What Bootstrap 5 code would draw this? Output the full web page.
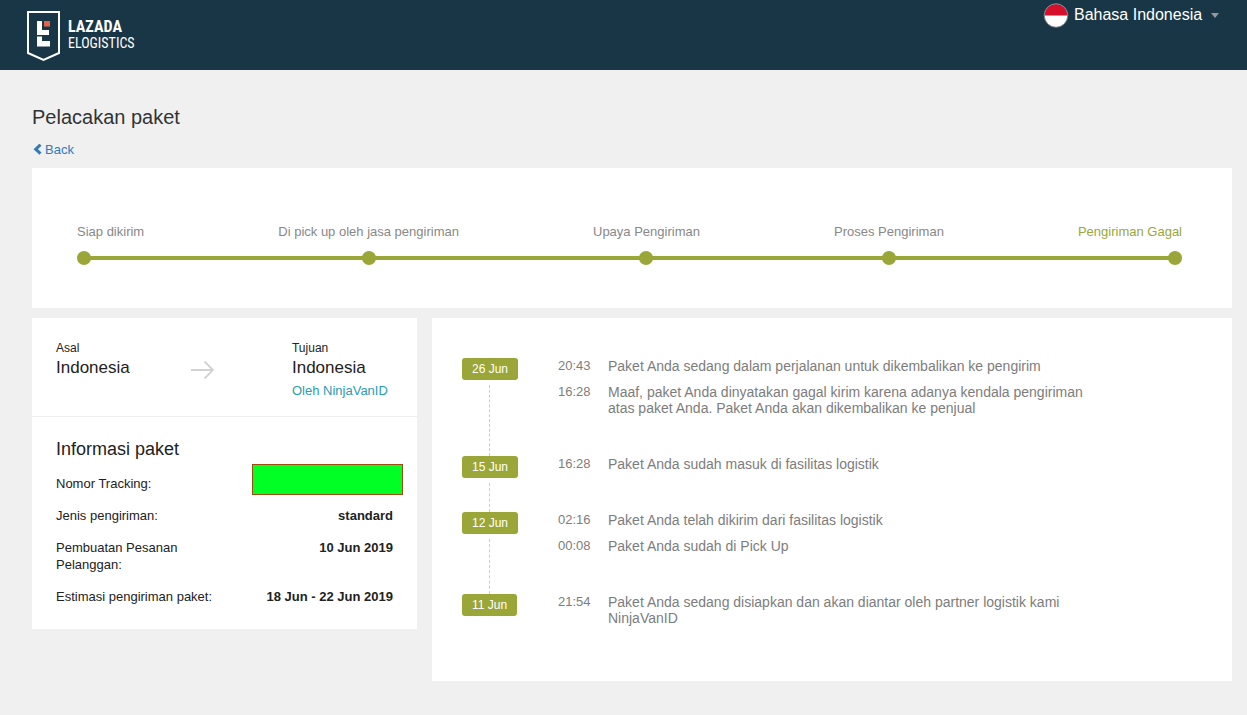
<!DOCTYPE html>
<html lang="id">
<head>
<meta charset="utf-8">
<meta name="viewport" content="width=device-width, initial-scale=1">
<title>Pelacakan paket - Lazada eLogistics</title>
<link href="https://cdn.jsdelivr.net/npm/bootstrap@5.3.0/dist/css/bootstrap.min.css" rel="stylesheet">
<style>
  :root { --olive: #9ba638; }
  body { background: #f0f0f0; color: #222; font-family: "Liberation Sans", Arial, sans-serif; font-size: 13px; line-height: 17px; }
  .topbar { background: #193647; min-height: 70px; padding: 0 28px 0 26px; }
  .brand { gap: 7px; margin-top: 10px; font-family: "Roboto Condensed", Roboto, sans-serif; font-size: 14px; line-height: 17px; }
  .brand strong { font-size: 16px; }
  .brand small { font-size: 14px; }
  .brand-name { padding-bottom: 2px; }
  .lang { gap: 5px; margin-top: 2px; }
  .lang-select { appearance: none; background: transparent; border: 0; color: #fff; font-size: 16px; line-height: 22px; height: 24px; padding: 0; }
  .lang-select option { color: #222; }
  .caret { width: 8px; height: 5px; margin-left: 3px; }
  .page { padding: 35px 15px 34px 32px; }
  .page-title { color: #333; font-size: 20px; line-height: 24px; margin-bottom: 11px; }
  .back { color: #337ab7; gap: 2px; line-height: 20px; margin-bottom: 8px; }
  .panel { background: #fff; }
  .steps-panel { padding: 55px 50px 43px 45px; margin-bottom: 10px; }
  .steps { color: #888; }
  .steps::before { content: ""; position: absolute; left: 7px; right: 7px; bottom: 5px; height: 4px; background: var(--olive); }
  .step { gap: 11px; align-items: center; }
  .step::after { content: ""; width: 14px; height: 14px; border-radius: 50%; background: var(--olive); position: relative; }
  .step:first-child { align-items: flex-start; }
  .step:last-child { align-items: flex-end; color: var(--olive); }
  .info-col { padding-right: 15px; }
  .route { padding: 22px 24px 13px; border-bottom: 1px solid #eee; }
  .route-label { font-size: 12px; line-height: 17px; }
  .route-place { font-size: 17px; line-height: 22px; }
  .route-by { color: #2b9cb5; line-height: 24px; display: block; }
  .route-to { width: 101px; }
  .route-arrow { margin-top: 20px; margin-right: 16px; }
  .details { padding: 21px 24px 9px; }
  .details h2 { font-size: 18px; line-height: 22px; margin-bottom: 15px; }
  .detail-row { margin-bottom: 15px; }
  .detail-row dt { max-width: 160px; }
  .masked { position: absolute; right: -10px; bottom: -3px; width: 151px; height: 31px; background: #00ff24; border: 1px solid #a04a12; }
  .timeline-panel { padding: 40px 30px 15px; }
  .day-rail { width: 96px; }
  .day { background: var(--olive); color: #fff; font-size: 12px; line-height: 22px; padding: 0 10px; border-radius: 3px; }
  .day-line { width: 1px; margin: 5px 0 0 27px; border-left: 1px dashed #ccc; }
  .events { color: #7d7d7d; padding-bottom: 30px; }
  .event { gap: 17px; margin-bottom: 10px; font-size: 14px; line-height: 16px; }
  .event time { font-size: 13px; width: 33px; }
  .event p { max-width: 490px; }
</style>
</head>
<body>
<header class="topbar d-flex justify-content-between align-items-start">
  <a href="#" class="brand d-flex align-items-center text-white text-decoration-none">
    <svg width="35" height="52" viewBox="0 0 35 52" aria-hidden="true">
      <path d="M2 2H33V43L17.500 50 2 43Z" fill="none" stroke="#fff" stroke-width="2"/>
      <path d="M11 11h5v9h7v5H11zM11 26.500h5V31h8v5.500H11z" fill="#fff"/>
      <path d="M18 11h6v5.500h-6z" fill="#e8604c"/>
    </svg>
    <span class="brand-name"><strong class="d-block">LAZADA</strong><small class="d-block">ELOGISTICS</small></span>
  </a>
  <div class="lang d-flex align-items-center">
    <svg width="26" height="26" viewBox="0 0 26 26" aria-hidden="true">
      <circle cx="13" cy="13.500" r="11.500" fill="#fff"/>
      <path d="M1.500 13.500a11.500 11.500 0 0 1 23 0z" fill="#d80f2b"/>
      <circle cx="13" cy="13.500" r="11.800" fill="none" stroke="#7c878d"/>
    </svg>
    <select class="lang-select" aria-label="Bahasa"><option>Bahasa Indonesia</option></select>
    <svg class="caret" viewBox="0 0 8 5" aria-hidden="true"><path d="M0 0h8L4 5z" fill="#93999c"/></svg>
  </div>
</header>

<main class="page">
  <h1 class="page-title fw-normal">Pelacakan paket</h1>
  <a href="#" class="back d-inline-flex align-items-center text-decoration-none">
    <svg width="11" height="12" viewBox="0 0 11 12" aria-hidden="true"><path d="M8.500 .7L3.700 5.200l4.800 4.500" fill="none" stroke="#337ab7" stroke-width="3"/></svg>Back
  </a>

  <section class="panel steps-panel">
    <ol class="steps list-unstyled d-flex justify-content-between position-relative mb-0">
      <li class="step d-flex flex-column">Siap dikirim</li>
      <li class="step d-flex flex-column">Di pick up oleh jasa pengiriman</li>
      <li class="step d-flex flex-column">Upaya Pengiriman</li>
      <li class="step d-flex flex-column">Proses Pengiriman</li>
      <li class="step d-flex flex-column" aria-current="step">Pengiriman Gagal</li>
    </ol>
  </section>

  <div class="row g-0 align-items-start">
    <div class="col-4 info-col">
      <div class="panel">
        <section class="route d-flex justify-content-between align-items-start">
          <div class="route-from">
            <div class="route-label">Asal</div>
            <div class="route-place">Indonesia</div>
          </div>
          <svg class="route-arrow" width="25" height="20" viewBox="0 0 25 20" aria-hidden="true"><path d="M1 10h22M14.500 1.500L23 10l-8.500 8.500" fill="none" stroke="#d2d2d2" stroke-width="1.800"/></svg>
          <div class="route-to">
            <div class="route-label">Tujuan</div>
            <div class="route-place">Indonesia</div>
            <a href="#" class="route-by text-decoration-none">Oleh NinjaVanID</a>
          </div>
        </section>
        <section class="details">
          <h2 class="fw-normal">Informasi paket</h2>
          <dl class="mb-0">
            <div class="detail-row d-flex justify-content-between position-relative"><dt class="fw-normal">Nomor Tracking:</dt><dd class="masked mb-0"></dd></div>
            <div class="detail-row d-flex justify-content-between"><dt class="fw-normal">Jenis pengiriman:</dt><dd class="fw-bold mb-0">standard</dd></div>
            <div class="detail-row d-flex justify-content-between"><dt class="fw-normal">Pembuatan Pesanan Pelanggan:</dt><dd class="fw-bold mb-0">10 Jun 2019</dd></div>
            <div class="detail-row d-flex justify-content-between"><dt class="fw-normal">Estimasi pengiriman paket:</dt><dd class="fw-bold mb-0">18 Jun - 22 Jun 2019</dd></div>
          </dl>
        </section>
      </div>
    </div>

    <div class="col-8">
      <section class="panel timeline-panel">
        <div class="d-flex">
          <div class="day-rail d-flex flex-column align-items-start flex-shrink-0"><span class="day">26 Jun</span><span class="day-line flex-grow-1"></span></div>
          <div class="events">
            <div class="event d-flex"><time>20:43</time><p class="mb-0">Paket Anda sedang dalam perjalanan untuk dikembalikan ke pengirim</p></div>
            <div class="event d-flex"><time>16:28</time><p class="mb-0">Maaf, paket Anda dinyatakan gagal kirim karena adanya kendala pengiriman atas paket Anda. Paket Anda akan dikembalikan ke penjual</p></div>
          </div>
        </div>
        <div class="d-flex">
          <div class="day-rail d-flex flex-column align-items-start flex-shrink-0"><span class="day">15 Jun</span><span class="day-line flex-grow-1"></span></div>
          <div class="events">
            <div class="event d-flex"><time>16:28</time><p class="mb-0">Paket Anda sudah masuk di fasilitas logistik</p></div>
          </div>
        </div>
        <div class="d-flex">
          <div class="day-rail d-flex flex-column align-items-start flex-shrink-0"><span class="day">12 Jun</span><span class="day-line flex-grow-1"></span></div>
          <div class="events">
            <div class="event d-flex"><time>02:16</time><p class="mb-0">Paket Anda telah dikirim dari fasilitas logistik</p></div>
            <div class="event d-flex"><time>00:08</time><p class="mb-0">Paket Anda sudah di Pick Up</p></div>
          </div>
        </div>
        <div class="d-flex">
          <div class="day-rail d-flex flex-column align-items-start flex-shrink-0"><span class="day">11 Jun</span></div>
          <div class="events">
            <div class="event d-flex"><time>21:54</time><p class="mb-0">Paket Anda sedang disiapkan dan akan diantar oleh partner logistik kami NinjaVanID</p></div>
          </div>
        </div>
      </section>
    </div>
  </div>
</main>
<script src="https://cdn.jsdelivr.net/npm/bootstrap@5.3.0/dist/js/bootstrap.bundle.min.js"></script>
</body>
</html>
